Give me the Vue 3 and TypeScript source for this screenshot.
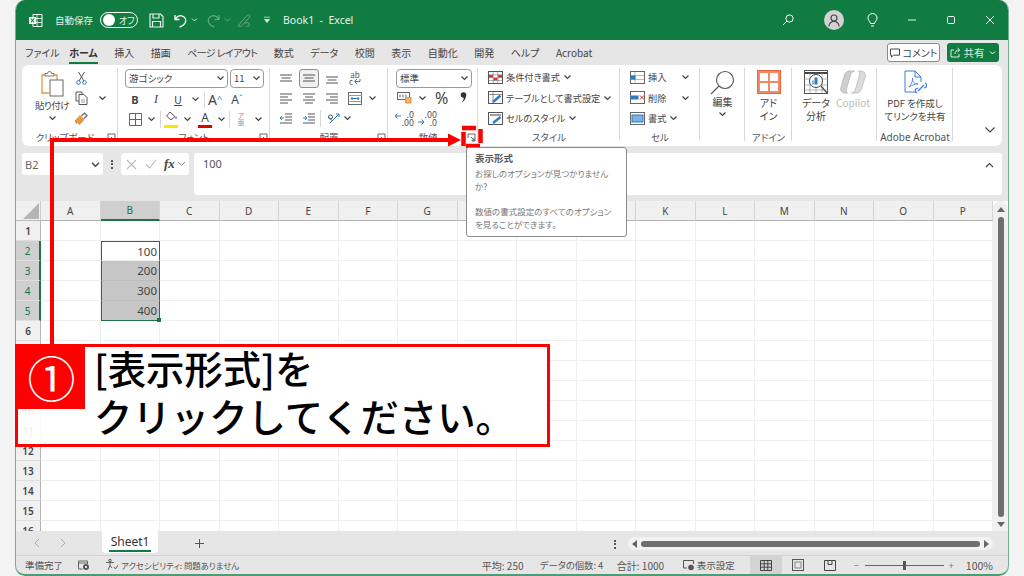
<template>
  <div class="page">
    <svg class="defs" width="0" height="0">
      <symbol id="chv" viewBox="0 0 9 6"><path d="M1.500 1.500 4.500 4.500 7.500 1.500" fill="none" stroke="#444" stroke-width="1.200" /></symbol>
      <symbol id="launch" viewBox="0 0 9 9"><path d="M1 5V1h7v7H5M4 4l3.500 3.500M7 4.800V7.200H4.600" fill="none" stroke="#666" /></symbol>
    </svg>

    <div class="win">
      <header class="title">
        <svg class="ic-xl" width="15" height="15" viewBox="0 0 15 15">
          <path d="M5 1.500h9v12H5z" fill="none" stroke="#fff" />
          <path d="M9 1.500v12M5 5.500h9M5 9.500h9" stroke="#fff" stroke-width=".8" />
          <rect x="1" y="4" width="7" height="7" fill="#fff" />
          <path d="M2.800 5.500 6.200 9.500M6.200 5.500 2.800 9.500" stroke="#107c41" stroke-width="1.100" />
        </svg>
        <span class="auto">自動保存</span>
        <span class="toggle"><i></i><b>オフ</b></span>
        <svg class="ic-save" width="15" height="15" viewBox="0 0 15 15"><path d="M1 1h10.500L14 3.500V14H1zM4 1v4h6V1M3.500 14V8.500h8V14" fill="none" stroke="#e4efe8" stroke-width="1.200" /></svg>
        <svg class="ic-undo" width="15" height="15" viewBox="0 0 15 15"><path d="M2 2v4.500h4.500M2.300 6.200C4 3.600 6.200 2.400 8.600 2.800c3.600.7 5 4.300 3.600 7C11 12 9 13.600 6.500 14" fill="none" stroke="#fff" stroke-width="1.300" /></svg>
        <svg class="ic-tchv" width="9" height="6"><path d="M2 1.500 4.500 4 7 1.500" fill="none" stroke="#d5e6dc" /></svg>
        <svg class="ic-redo" width="15" height="15" viewBox="0 0 15 15"><path d="M13 2v4.500H8.500M12.700 6.200C11 3.600 8.800 2.400 6.400 2.800c-3.600.7-5 4.300-3.600 7C4 12 6 13.600 8.500 14" fill="none" stroke="#62a982" stroke-width="1.200" /></svg>
        <svg class="ic-tchv2" width="9" height="6"><path d="M2 1.500 4.500 4 7 1.500" fill="none" stroke="#62a982" /></svg>
        <svg class="ic-draw" width="15" height="15" viewBox="0 0 15 15"><path d="M1 13 9 3.500 11.500 1.500 13 3 11.500 5.500 4 13.500zM8 10.500c2-1.500 4-1 4.500.5s-1 2.500-3 2.500" fill="none" stroke="#62a982" /></svg>
        <svg class="ic-qat" width="8" height="8" viewBox="0 0 8 8"><path d="M1 1.200h6M1.500 3.500h5L4 6.500z" fill="#e4efe8" stroke="#e4efe8" stroke-width=".7" /></svg>
        <span class="doc">Book1&nbsp; -&nbsp; Excel</span>
        <span class="title-right">
          <svg class="ic-search" width="12" height="12" viewBox="0 0 12 12"><circle cx="7.500" cy="4.500" r="3.600" fill="none" stroke="#fff" /><path d="M5 7 1 11" stroke="#fff" /></svg>
          <span class="avatar">
            <svg width="12" height="13" viewBox="0 0 12 13"><circle cx="6" cy="4" r="3" fill="none" stroke="#444" stroke-width="1.100" /><path d="M.8 12.500c.5-3.500 2.500-5 5.200-5s4.700 1.500 5.200 5" fill="none" stroke="#444" stroke-width="1.100" /></svg>
          </span>
          <svg class="ic-bulb" width="11" height="14" viewBox="0 0 11 14"><path d="M3.500 10.500C3 8 1 7.500 1 5a4.500 4.500 0 0 1 9 0c0 2.500-2 3-2.500 5.500zM4 13h3" fill="none" stroke="#fff" /></svg>
          <span class="wbtn"><svg width="10" height="10"><path d="M1 5h8" stroke="#e4efe8" /></svg></span>
          <span class="wbtn"><svg width="10" height="10"><rect x="1.500" y="1.500" width="7" height="7" rx="1.200" fill="none" stroke="#fff" /></svg></span>
          <span class="wbtn"><svg width="10" height="10"><path d="M1 1 9 9M9 1 1 9" stroke="#fff" /></svg></span>
        </span>
      </header>

      <nav class="menu">
        <span v-for="t in tabs" :key="t" class="tab" :class="{ on: t === 'ホーム' }">{{ t }}</span>
        <span class="menu-right">
          <span class="comment">
            <svg width="10" height="10" viewBox="0 0 10 10"><path d="M.5 1h9v6.200H3.500L1.500 9V7.200h-1z" fill="none" stroke="#333" stroke-width=".9" /></svg>
            コメント
          </span>
          <span class="share">
            <svg width="11" height="11" viewBox="0 0 11 11"><path d="M4 3H1v7h8V7M5 7c0-2.500 1.500-4 4-4M7.500 1 9.800 3 7.500 5" fill="none" stroke="#dcebe2" /></svg>
            共有
            <svg width="9" height="6"><path d="M2 1.500 4.500 4 7 1.500" fill="none" stroke="#fff" /></svg>
          </span>
        </span>
      </nav>

      <section class="ribbon">
        <!-- クリップボード -->
        <div class="grp g-clip">
          <div class="body clip">
            <div class="paste">
              <svg width="23" height="26" viewBox="0 0 23 26">
                <path d="M13 4h3v14M8 22H1V4h3" fill="none" stroke="#e8973a" stroke-width="1.300" />
                <path d="M4 5V2.500h2.500a2 2 0 0 1 4 0H13V5z" fill="#fff" stroke="#777" />
                <rect x="9" y="9" width="13" height="16" fill="#fff" stroke="#666" />
              </svg>
              <span class="lb">貼り付け</span>
              <svg class="c" width="9" height="6"><use href="#chv" /></svg>
            </div>
            <div class="clip-tools">
              <span class="tool">
                <svg width="11" height="14" viewBox="0 0 11 14"><path d="M2.500 1 8 10M8.500 1 3 10" stroke="#555" /><circle cx="2.500" cy="11.500" r="1.800" fill="none" stroke="#2c7cc4" /><circle cx="8.500" cy="11.500" r="1.800" fill="none" stroke="#2c7cc4" /></svg>
              </span>
              <span class="tool">
                <svg width="13" height="14" viewBox="0 0 13 14"><path d="M1 1h6v2M1 1v9h3" fill="none" stroke="#555" /><path d="M4 3.500h5l3 3v7H4z" fill="#fff" stroke="#555" /><path d="M6 9h4M6 11h4" stroke="#777" stroke-width=".7" /></svg>
                <svg class="c-abs" width="9" height="6"><use href="#chv" /></svg>
              </span>
              <span class="tool">
                <svg width="14" height="13" viewBox="0 0 14 13"><path d="M1 9 6 3.500 10 7.500 5.500 12.500 3.500 10.500 2.500 11.500z" fill="#ea9a3e" stroke="#d67c1f" stroke-width=".7" /><path d="M7.500 4 10.500 1l2.500 2.500-3 3" fill="none" stroke="#666" stroke-width="1.200" /></svg>
              </span>
            </div>
          </div>
          <div class="cap pad">クリップボード<svg class="launch" width="9" height="9"><use href="#launch" /></svg></div>
        </div>

        <!-- フォント -->
        <div class="grp g-font">
          <div class="body col">
            <div class="row sel-row">
              <span class="sel sel-font">游ゴシック<svg width="9" height="6"><use href="#chv" /></svg></span>
              <span class="sel sel-size">11<svg width="9" height="6"><use href="#chv" /></svg></span>
            </div>
            <div class="row r2">
              <span class="btn bold">B</span>
              <span class="btn ital">I</span>
              <span class="btn und">U</span>
              <svg class="cv" width="9" height="6"><use href="#chv" /></svg>
              <span class="vsep"></span>
              <span class="btn big">A<sup>^</sup></span>
              <span class="btn mid">A<sup>ˇ</sup></span>
            </div>
            <div class="row r3">
              <span class="btn">
                <svg width="13" height="13"><path d="M.5.500h12v12H.5zM6.500.5v12M.5 6.500h12" fill="none" stroke="#666" /></svg>
              </span>
              <svg class="cv" width="9" height="6"><use href="#chv" /></svg>
              <span class="vsep"></span>
              <span class="btn colorbtn">
                <svg width="13" height="9" viewBox="0 0 13 9"><path d="M5 1 10 5.500 6 9 1.500 5z" fill="none" stroke="#555" /><path d="M11 5c1 1.500 1.200 3 0 3s-1-1.500 0-3z" fill="#2c7cc4" /></svg>
                <i class="bar yellow"></i>
              </span>
              <svg class="cv" width="9" height="6"><use href="#chv" /></svg>
              <span class="btn colorbtn fcolor">A<i class="bar red"></i></span>
              <svg class="cv" width="9" height="6"><use href="#chv" /></svg>
              <span class="vsep"></span>
              <span class="btn furi"><small>ア</small><small>亜</small></span>
              <svg class="cv" width="9" height="6"><use href="#chv" /></svg>
            </div>
          </div>
          <div class="cap">フォント<svg class="launch" width="9" height="9"><use href="#launch" /></svg></div>
        </div>

        <!-- 配置 -->
        <div class="grp g-align">
          <div class="body col">
            <div class="row ar">
              <span class="btn"><svg width="14" height="9"><path d="M1 1h12M2.500 4h9M1 7h12" stroke="#555" /></svg></span>
              <span class="btn active"><svg width="14" height="9"><path d="M1 1h12M2.500 4h9M1 7h12" stroke="#555" /></svg></span>
              <span class="btn"><svg class="low" width="14" height="9"><path d="M1 1h12M2.500 4h9M1 7h12" stroke="#555" /></svg></span>
              <span class="btn abc"><small>ab</small><small>c<svg width="8" height="7"><path d="M7 1v2.500H2M4 1 1.500 3.500 4 6" fill="none" stroke="#2c7cc4" /></svg></small></span>
            </div>
            <div class="row ar">
              <span class="btn"><svg width="14" height="11"><path d="M1 1h12M1 4h8M1 7h12M1 10h8" stroke="#555" /></svg></span>
              <span class="btn"><svg width="14" height="11"><path d="M1 1h12M3 4h8M1 7h12M3 10h8" stroke="#555" /></svg></span>
              <span class="btn"><svg width="14" height="11"><path d="M1 1h12M5 4h8M1 7h12M5 10h8" stroke="#555" /></svg></span>
              <span class="btn">
                <svg width="14" height="13"><rect x=".5" y=".5" width="13" height="12" fill="#fff" stroke="#666" /><path d="M.5 3.500h13M.5 9.500h13" stroke="#999" /><path d="M3 6.500h8M4.500 5 3 6.500 4.500 8M9.500 5 11 6.500 9.500 8" fill="none" stroke="#2c7cc4" /></svg>
              </span>
              <svg class="cv" width="9" height="6"><use href="#chv" /></svg>
            </div>
            <div class="row ar a3">
              <span class="btn"><svg width="14" height="11"><path d="M6 1h7M6 4h7M6 7h7M1 10h12" stroke="#555" /><path d="M1 5h4M3 3 1 5l2 2" fill="none" stroke="#2c7cc4" /></svg></span>
              <span class="btn"><svg width="14" height="11"><path d="M6 1h7M6 4h7M6 7h7M1 10h12" stroke="#555" /><path d="M1 5h4M3 3l2 2-2 2" fill="none" stroke="#2c7cc4" /></svg></span>
              <span class="vsep"></span>
              <span class="btn">
                <svg width="14" height="13" viewBox="0 0 14 13"><path d="M3 11 12 2M9 2h3v3" fill="none" stroke="#2c7cc4" /><circle cx="3.500" cy="5" r="2" fill="none" stroke="#555" /><path d="M5.500 9 2 5.500" stroke="#555" /></svg>
              </span>
              <svg class="cv" width="9" height="6"><use href="#chv" /></svg>
            </div>
          </div>
          <div class="cap">配置<svg class="launch" width="9" height="9"><use href="#launch" /></svg></div>
        </div>

        <!-- 数値 -->
        <div class="grp g-num">
          <div class="body col">
            <div class="row sel-row"><span class="sel sel-num">標準<svg width="9" height="6"><use href="#chv" /></svg></span></div>
            <div class="row nr">
              <span class="btn acc">
                <svg width="15" height="12" viewBox="0 0 15 12"><rect x=".5" y=".5" width="12" height="7" fill="#fff" stroke="#666" /><path d="M3 2.500v3M6 2.500v3M9 2.500v3" stroke="#666" /><rect x="8" y="5" width="6.500" height="6.500" rx="1" fill="#e8973a" /><path d="M9.500 7h3.500M9.500 9h3.500" stroke="#fff" stroke-width=".7" /></svg>
              </span>
              <svg class="cv" width="9" height="6"><use href="#chv" /></svg>
              <span class="pct">%</span>
              <svg class="comma" width="7" height="11" viewBox="0 0 7 11"><circle cx="3.500" cy="3" r="2.800" fill="#333" /><path d="M6 3.500C6 7 4 9.500 1.500 10.500 3.500 8.500 4 6.500 3.800 4z" fill="#333" /></svg>
            </div>
            <div class="row nr">
              <span class="btn dec"><svg width="20" height="16" viewBox="0 0 20 16"><path d="M1 5h6M3.500 2.500 1 5l2.500 2.500" fill="none" stroke="#2c7cc4" /></svg><b class="d1">.0</b><b class="d2">.00</b></span>
              <span class="btn dec"><svg width="20" height="16" viewBox="0 0 20 16"><path d="M1 11h6M4.500 8.500 7 11l-2.500 2.500" fill="none" stroke="#2c7cc4" /></svg><b class="d1">.00</b><b class="d2">.0</b></span>
            </div>
          </div>
          <div class="cap pad">数値<svg class="launch" width="9" height="9"><use href="#launch" /></svg></div>
        </div>

        <!-- スタイル -->
        <div class="grp g-style">
          <div class="body col">
            <div v-for="(s, i) in styleItems" :key="s" class="row line">
              <svg v-if="i === 0" width="15" height="13" viewBox="0 0 15 13"><rect x=".5" y=".5" width="14" height="12" fill="#fff" stroke="#555" /><rect x="1" y="4" width="4" height="2.500" fill="#d9302c" /><rect x="10" y="4" width="4" height="2.500" fill="#d9302c" /><rect x="5.500" y="7" width="4" height="2.500" fill="#d9302c" /><path d="M5.200 1v11M9.800 1v11M1 3.800h13M1 6.700h13M1 9.600h13" stroke="#777" stroke-width=".6" /></svg>
              <svg v-else-if="i === 1" width="15" height="13" viewBox="0 0 15 13"><rect x=".5" y=".5" width="14" height="12" fill="#fff" stroke="#555" /><path d="M.5 3.500h14M5 .5v12" stroke="#666" stroke-width=".7" /><path d="M5 11 12.500 4.500" stroke="#2c7cc4" stroke-width="2.400" /></svg>
              <svg v-else width="15" height="13" viewBox="0 0 15 13"><rect x=".5" y=".5" width="14" height="12" fill="#fff" stroke="#555" /><path d="M2 3h11" stroke="#888" stroke-width="1.600" /><path d="M5 11 12.500 5" stroke="#2c7cc4" stroke-width="2.400" /></svg>
              <span class="tx">{{ s }}</span>
              <svg width="9" height="6"><use href="#chv" /></svg>
            </div>
          </div>
          <div class="cap">スタイル</div>
        </div>

        <!-- セル -->
        <div class="grp g-cell">
          <div class="body col">
            <div class="row line">
              <svg width="15" height="13" viewBox="0 0 15 13"><rect x=".5" y=".5" width="14" height="12" fill="#fff" stroke="#666" /><path d="M.5 4.500h14M.5 8.500h14M5 .5v12" stroke="#888" stroke-width=".6" /><rect x=".5" y="4.500" width="5" height="4" fill="#2c7cc4" /></svg>
              <span class="tx">挿入</span>
              <svg class="cell-c" width="9" height="6"><use href="#chv" /></svg>
            </div>
            <div class="row line">
              <svg width="15" height="13" viewBox="0 0 15 13"><rect x=".5" y=".5" width="14" height="12" fill="#fff" stroke="#666" /><rect x=".5" y="4.500" width="8" height="4" fill="#2c7cc4" /><path d="M10 4.500 14 8.500M14 4.500 10 8.500" stroke="#d9302c" /></svg>
              <span class="tx">削除</span>
              <svg class="cell-c" width="9" height="6"><use href="#chv" /></svg>
            </div>
            <div class="row line">
              <svg width="15" height="13" viewBox="0 0 15 13"><rect x=".5" y=".5" width="14" height="12" fill="#fff" stroke="#666" /><rect x="2" y="3" width="11" height="7" fill="#7fb2e0" stroke="#2c7cc4" /></svg>
              <span class="tx">書式</span>
              <svg width="9" height="6"><use href="#chv" /></svg>
            </div>
          </div>
          <div class="cap">セル</div>
        </div>

        <!-- 編集 -->
        <div class="grp g-edit">
          <div class="body big-col">
            <svg width="25" height="25" viewBox="0 0 25 25"><circle cx="15" cy="10" r="8.500" fill="none" stroke="#555" stroke-width="1.100" /><path d="M9 16 1 24" stroke="#555" stroke-width="1.100" /></svg>
            <span class="lb">編集</span>
            <svg class="c" width="9" height="6"><use href="#chv" /></svg>
          </div>
        </div>

        <!-- アドイン -->
        <div class="grp g-addin">
          <div class="body big-col">
            <svg width="24" height="24" viewBox="0 0 24 24"><rect x=".5" y=".5" width="23" height="23" fill="#ee8a66" stroke="#e9673c" /><path d="M3 3h8v8H3zM13 3h8v8h-8zM3 13h8v8H3zM13 13h8v8h-8z" fill="#fff" /></svg>
            <span class="lb two">アド<br />イン</span>
          </div>
          <div class="cap">アドイン</div>
        </div>

        <!-- データ分析 / Copilot -->
        <div class="grp g-data">
          <div class="body pair">
            <div class="big-col">
              <svg width="24" height="24" viewBox="0 0 24 24"><rect x=".5" y=".5" width="23" height="23" fill="#fff" stroke="#555" /><path d="M.5 3h23" stroke="#444" stroke-width="2" /><path d="M.5 9h23M.5 15h23M.5 20h23M6 3v20M12 3v20M18 3v20" stroke="#999" stroke-width=".7" /><circle cx="12" cy="11" r="6.500" fill="#fff" stroke="#444" /><rect x="10.500" y="7.500" width="3" height="7" fill="#2c7cc4" /><rect x="8" y="10.500" width="2.200" height="4" fill="#7fb2e0" /><path d="M17 16 23 23" stroke="#555" stroke-width="1.400" /></svg>
              <span class="lb two">データ<br />分析</span>
            </div>
            <div class="big-col copilot">
              <svg width="28" height="24" viewBox="0 0 27 24"><path d="M5 23c-3 0-4.500-3-3.500-6L5 5c.8-2.800 3-4 5-4h5c-2 .5-3.500 2-4 4L7 19c-.5 2 0 3.500 1 4z" fill="#cfcfcf" stroke="#aaa" stroke-width=".6" /><path d="M22 1c3 0 4.500 3 3.500 6L22 19c-.8 2.800-3 4-5 4h-5c2-.5 3.500-2 4-4l4-14c.5-2 0-3.500-1-4z" fill="#dcdcdc" stroke="#aaa" stroke-width=".6" /></svg>
              <span class="lb">Copilot</span>
            </div>
          </div>
        </div>

        <!-- Acrobat -->
        <div class="grp g-acro">
          <div class="body big-col">
            <svg width="23" height="25" viewBox="0 0 23 25"><path d="M12 22H1V1h10l6 6v5M11 1v6h6" fill="none" stroke="#3b78e0" /><path d="M5 17c2-2 4-6 3.500-9C8 11 10 14 14 14c-3 0-6 1-9 3z" fill="none" stroke="#3b78e0" stroke-width=".8" /><path d="M14 21l6-6M13 23a2.500 2.500 0 0 1-1-4l2-1M21 13a2.500 2.500 0 0 1 1 4l-2 1" fill="none" stroke="#3b78e0" stroke-width="1.200" /></svg>
            <span class="lb two acro-lb">PDF を作成し<br />てリンクを共有</span>
          </div>
          <div class="cap acro-cap">Adobe Acrobat</div>
        </div>

        <div class="collapse">
          <svg width="12" height="8" viewBox="0 0 12 8"><path d="M1.500 1.500 6 6l4.500-4.500" fill="none" stroke="#444" stroke-width="1.100" /></svg>
        </div>
      </section>

      <section class="fbar">
        <div class="namebox">B2<svg width="11" height="7" viewBox="0 0 9 6"><use href="#chv" /></svg></div>
        <span class="dots"><i></i><i></i><i></i></span>
        <div class="fxbox">
          <svg width="11" height="11"><path d="M1 1 10 10M10 1 1 10" stroke="#bbb" stroke-width="1.100" /></svg>
          <svg width="12" height="10"><path d="M1 5.500 4.500 9 11 1" fill="none" stroke="#bbb" stroke-width="1.100" /></svg>
          <em>fx</em>
          <svg width="9" height="6"><path d="M1 1 4.500 4.500 8 1" fill="none" stroke="#888" /></svg>
        </div>
        <div class="finput">
          100
          <svg width="9" height="6"><path d="M1 5 4.500 1.500 8 5" fill="none" stroke="#444" stroke-width="1.200" /></svg>
        </div>
      </section>

      <section class="sheet">
        <div class="grid">
          <div class="hd corner"><svg width="16" height="16"><path d="M16 0V16H0z" fill="#b5b5b5" /></svg></div>
          <div v-for="c in cols" :key="c" class="hd colh" :class="{ picked: c === 'B' }">{{ c }}</div>
          <template v-for="r in rows" :key="r">
            <div class="hd rowh" :class="{ picked: r >= 2 && r <= 5 }">{{ r }}</div>
            <div
              v-for="c in cols"
              :key="c"
              class="cell"
              :class="cellClass(c, r)"
            >{{ cellValue(c, r) }}</div>
          </template>
        </div>
        <div class="vscroll">
          <span class="tri up"></span>
          <span class="vthumb"></span>
          <span class="tri down"></span>
        </div>
      </section>

      <section class="tabs">
        <span class="nav">
          <svg width="6" height="10"><path d="M5 1 1 5l4 4" fill="none" stroke="#aaa" /></svg>
          <svg width="6" height="10"><path d="M1 1l4 4-4 4" fill="none" stroke="#aaa" /></svg>
        </span>
        <span class="stab">Sheet1</span>
        <span class="plus">
          <svg width="11" height="11"><path d="M5.500 1v9M1 5.500h9" stroke="#555" /></svg>
        </span>
        <span class="dots small"><i></i><i></i><i></i></span>
        <span class="hscroll">
          <span class="tri left"></span>
          <span class="hthumb"></span>
          <span class="tri right"></span>
        </span>
      </section>

      <footer class="status">
        <span class="ready">準備完了</span>
        <svg class="st-macro" width="12" height="11" viewBox="0 0 12 11"><path d="M.5 1h9v3M.5 1v8h4" fill="none" stroke="#666" /><path d="M.5 3h9" stroke="#666" /><circle cx="8" cy="7" r="3" fill="#555" /><circle cx="8" cy="7" r="1.100" fill="#fff" /></svg>
        <svg class="st-acc" width="13" height="12" viewBox="0 0 13 12"><circle cx="5" cy="1.500" r="1.200" fill="none" stroke="#555" /><path d="M1 3.500h8M5 3.500v3L3 11M5 6.500 7 9M9 8l1.500 2L13 6" fill="none" stroke="#555" stroke-width=".9" /></svg>
        <span class="acc-tx">アクセシビリティ: 問題ありません</span>
        <span class="st-right">
          <span class="s1">平均: 250</span>
          <span class="s2">データの個数: 4</span>
          <span class="s3">合計: 1000</span>
          <span class="s4">
            <svg width="12" height="11" viewBox="0 0 12 11"><path d="M4 8H.5V.5h10V4" fill="none" stroke="#555" /><circle cx="8" cy="7.500" r="2.800" fill="#555" /></svg>
            表示設定
          </span>
          <span class="view on"><svg width="12" height="11"><path d="M.5.500h11v10H.5zM4.200.500v10M7.800.500v10M.5 3.800h11M.5 7.200h11" fill="none" stroke="#444" /></svg></span>
          <span class="view"><svg width="12" height="12"><rect x=".5" y=".5" width="11" height="11" fill="none" stroke="#555" /><rect x="3" y="3" width="6" height="6" fill="none" stroke="#888" /></svg></span>
          <span class="view"><svg width="12" height="11"><path d="M.5.500h11v10H.5zM4 .5v4h4v-4" fill="none" stroke="#444" /></svg></span>
          <span class="zoom">
            <i class="zm">−</i>
            <span class="slider"><b></b></span>
            <i class="zm">+</i>
          </span>
          <span class="pct100">100%</span>
        </span>
      </footer>
    </div>

    <!-- 注釈 -->
    <svg class="marks" width="1024" height="576" viewBox="0 0 1024 576">
      <path d="M52 345V140H452" fill="none" stroke="#f00" stroke-width="4" />
      <path d="M448 133.500 461 140 448 146.500z" fill="#f00" />
      <path d="M462 128h14M480.500 129v14M480 146h-14M463.500 146v-14" fill="none" stroke="#f00" stroke-width="4.500" />
    </svg>

    <div class="tip">
      <strong>表示形式</strong>
      <p>お探しのオプションが見つかりません<br />か?</p>
      <p>数値の書式設定のすべてのオプション<br />を見ることができます。</p>
    </div>

    <div class="callout">
      <div class="num">①</div>
      <div class="msg">[表示形式]を<br />クリックしてください。</div>
    </div>
  </div>
</template>

<script setup lang="ts">
const tabs = ['ファイル', 'ホーム', '挿入', '描画', 'ページ レイアウト', '数式', 'データ', '校閲', '表示', '自動化', '開発', 'ヘルプ', 'Acrobat'];
const styleItems = ['条件付き書式', 'テーブルとして書式設定', 'セルのスタイル'];
const cols = 'ABCDEFGHIJKLMNOP'.split('');
const rows = Array.from({ length: 16 }, (_, i) => i + 1);
const values: Record<number, number> = { 2: 100, 3: 200, 4: 300, 5: 400 };

const cellValue = (c: string, r: number) => (c === 'B' && values[r] ? values[r] : '');

const cellClass = (c: string, r: number) => {
  if (c !== 'B' || !values[r]) return '';
  return {
    range: true,
    first: r === 2,
    shade: r > 2,
    last: r === 5,
  };
};
</script>

<style>
html,
body {
  margin: 0;
  background: #f3f3f3;
}
</style>

<style scoped>
.page {
  position: relative;
  width: 1024px;
  height: 576px;
  overflow: hidden;
  background: #f3f3f3;
  font-family: "Noto Sans CJK JP", "Noto Sans", sans-serif;
  font-feature-settings: "palt";
  color: #444;
}
.defs {
  position: absolute;
}
.win {
  margin-left: 15px;
  width: 994px;
  height: 576px;
  box-sizing: border-box;
  display: flex;
  flex-direction: column;
  border-radius: 10px;
  border-left: 1px solid #74b08f;
  border-right: 1px solid #74b08f;
  border-bottom: 2px solid #4f9c74;
  background: #e6e6e6;
  overflow: hidden;
}

/* title */
.title {
  flex: none;
  height: 40px;
  background: #107c41;
  color: #e8f2ec;
  display: flex;
  align-items: center;
  font-size: 10px;
  margin: 0 -1px;
}
.ic-xl { margin-left: 13px; }
.auto { margin-left: 12px; font-size: 9.500px; width: 38px; }
.toggle {
  margin-left: 7px;
  width: 38px;
  height: 16px;
  box-sizing: border-box;
  border: 1px solid #fff;
  border-radius: 9px;
  display: flex;
  align-items: center;
  padding-left: 2px;
}
.toggle i { width: 12px; height: 12px; border-radius: 50%; background: #fff; }
.toggle b { font-weight: 400; font-size: 9px; margin-left: 4px; }
.ic-save { margin-left: 11px; }
.ic-undo { margin-left: 9px; }
.ic-tchv { margin-left: 2px; }
.ic-redo { margin-left: 7px; }
.ic-tchv2 { margin-left: 2px; }
.ic-draw { margin-left: 5px; }
.ic-qat { margin-left: 11px; }
.doc { margin-left: 12px; font-size: 10.500px; font-family: "Noto Sans", sans-serif; white-space: nowrap; }
.title-right { margin-left: auto; display: flex; align-items: center; }
.ic-search { margin-right: 30px; }
.avatar {
  width: 20px;
  height: 20px;
  border-radius: 50%;
  background: #d2d2d2;
  display: flex;
  align-items: center;
  justify-content: center;
  margin-right: 23px;
}
.ic-bulb { margin-right: 14px; }
.wbtn { width: 39px; display: flex; justify-content: center; }

/* menu */
.menu {
  flex: none;
  height: 25px;
  display: flex;
  align-items: center;
  padding-left: 9px;
  gap: 16.500px;
  font-size: 10px;
  color: #444;
}
.tab { position: relative; white-space: nowrap; line-height: 23px; }
.tab:first-child { margin-right: -7px; }
.tab:nth-child(5) { letter-spacing: -.6px; }
.tab.on { font-weight: 700; color: #333; }
.tab.on::after {
  content: "";
  position: absolute;
  left: 0;
  right: 0;
  bottom: 0;
  height: 2px;
  background: #107c41;
}
.menu-right { margin-left: auto; display: flex; gap: 7px; margin-right: 9px; }
.comment, .share {
  height: 19px;
  box-sizing: border-box;
  display: flex;
  align-items: center;
  gap: 3px;
  border-radius: 3px;
  font-size: 10px;
}
.comment { width: 53px; border: 1px solid #8a8a8a; background: #fff; justify-content: center; color: #444; }
.share { width: 52px; background: #107c41; color: #dcebe2; justify-content: center; font-size: 10.500px; }

/* ribbon */
.ribbon {
  flex: none;
  height: 81px;
  margin: 0 6px;
  background: #fff;
  border-radius: 6px;
  display: flex;
  position: relative;
}
.grp {
  flex: none;
  box-sizing: border-box;
  display: flex;
  flex-direction: column;
  padding-top: 3px;
  position: relative;
}
.grp::after {
  content: "";
  position: absolute;
  right: 0;
  top: 3px;
  bottom: 5px;
  width: 1px;
  background: #d8d8d8;
}
.g-clip { width: 96px; }
.g-font { width: 152px; }
.g-align { width: 118px; }
.g-num { width: 90px; }
.g-style { width: 142px; }
.g-cell { width: 80px; }
.g-edit { width: 45px; }
.g-addin { width: 47px; }
.g-data { width: 85px; }
.g-acro { width: 76px; }
.body { flex: 1; }
.col { display: flex; flex-direction: column; }
.cap {
  flex: none;
  height: 16px;
  line-height: 15px;
  text-align: center;
  font-size: 9.500px;
  color: #555;
  position: relative;
  white-space: nowrap;
}
.cap.pad { padding-right: 10px; }
.launch { position: absolute; right: 2px; top: 3px; }
.row { display: flex; align-items: center; height: 20px; flex: none; }
.btn {
  flex: none;
  width: 20px;
  height: 19px;
  display: flex;
  align-items: center;
  justify-content: center;
  box-sizing: border-box;
}
.cv { flex: none; }
.vsep { flex: none; width: 1px; height: 17px; background: #d8d8d8; }

.clip { display: flex; }
.paste { width: 45px; display: flex; flex-direction: column; align-items: center; padding-left: 15px; box-sizing: border-box; padding-top: 3px; }
.paste .lb { margin-top: 2px; font-size: 9.500px; letter-spacing: -.5px; }
.lb { font-size: 10px; color: #444; line-height: 13px; text-align: center; white-space: nowrap; }
.lb.two { margin-top: 2px; }
.c { margin-top: 3px; }
.clip-tools { display: flex; flex-direction: column; padding-left: 4px; }
.tool { height: 20px; width: 20px; display: flex; align-items: center; justify-content: center; position: relative; }
.c-abs { position: absolute; left: 27px; top: 7px; }

.sel {
  box-sizing: border-box;
  height: 19px;
  border: 1px solid #9a9a9a;
  border-radius: 4px;
  display: flex;
  align-items: center;
  justify-content: space-between;
  padding: 0 2px 0 3px;
  font-size: 9.500px;
  color: #444;
}
.g-font .sel-row { padding-left: 7px; gap: 2px; }
.sel-font { width: 103px; }
.sel-size { width: 34px; }
.g-num .sel-row { padding-left: 8px; }
.sel-num { width: 76px; }
.r2, .r3 { padding-left: 7px; }
.r2 { margin-top: 1px; }
.r2 .btn { font-size: 11px; }
.bold { font-weight: 700; font-family: "Noto Sans", sans-serif; }
.ital { margin-left: 1px; font-style: italic; font-family: "Liberation Serif", serif; font-size: 12px !important; }
.und { margin-left: 2px; text-decoration: underline; }
.r2 .cv { margin-left: 2.500px; }
.r2 .vsep { margin-left: 4.500px; }
.big, .mid { font-family: "Noto Sans", sans-serif; }
.big { font-size: 14px !important; }
.mid { font-size: 12px !important; margin-left: 2px; }
.big sup, .mid sup { font-size: 9px; color: #2c7cc4; line-height: 0; }
.r3 > :nth-child(2) { margin-left: 2px; }
.r3 > :nth-child(3) { margin-left: 4px; }
.r3 > :nth-child(5) { margin-left: 1.500px; }
.r3 > :nth-child(6) { margin-left: 3.500px; }
.r3 > :nth-child(7) { margin-left: 1.500px; }
.r3 > :nth-child(8) { margin-left: 3.500px; }
.r3 > :nth-child(9) { margin-left: 1px; }
.r3 > :nth-child(10) { margin-left: 2.500px; }
.colorbtn { flex-direction: column; height: 17px; justify-content: flex-start; position: relative; }
.fcolor { font-size: 12px; line-height: 13px; font-family: "Noto Sans", sans-serif; }
.bar { position: absolute; left: 3px; right: 3px; bottom: 0; height: 3px; }
.yellow { background: #ffe600; }
.red { background: #e00000; }
.furi { flex-direction: column; color: #999; }
.furi small { font-size: 7px; line-height: 7px; }

.ar { padding-left: 6px; gap: 3px; }
.a3 .vsep { margin-left: -2px; }
.a3 .cv { margin-left: -4px; }
.active { background: #f0f0f0; border: 1px solid #8e8e8e; border-radius: 3px; }
.low { margin-top: 4px; }
.abc { flex-direction: column; font-size: 8px; line-height: 7px; color: #555; }
.abc small { font-size: 8px; display: flex; align-items: center; }

.nr { padding-left: 6px; }
.acc { width: 21px; }
.nr .cv { margin-left: 3px; }
.pct { font-size: 16px; margin-left: 8px; width: 18px; font-family: "Noto Sans", sans-serif; color: #444; }
.comma { margin-left: 7px; margin-bottom: 2px; }
.dec { position: relative; width: 20px; margin-right: 3px; }
.dec svg { position: absolute; left: 0; top: 2px; }
.dec b { position: absolute; right: 0; font-size: 9px; font-weight: 400; line-height: 8px; color: #555; }
.d1 { top: 2px; }
.d2 { top: 10px; }

.line { padding-left: 10px; gap: 3px; height: 20.500px; }
.tx { font-size: 9.200px; color: #444; white-space: nowrap; }
.g-style .row:first-child, .g-cell .row:first-child { margin-top: -1px; }
.cell-c { margin-left: 12px; }

.big-col { display: flex; flex-direction: column; align-items: center; padding-top: 2px; }
.pair { display: flex; padding-left: 4px; }
.pair .big-col { width: 40px; }
.pair .big-col:last-child { width: 34px; }
.copilot .lb { color: #bbb; margin-top: 2px; }
.acro-lb { font-size: 9.500px; }
.acro-cap { font-size: 10px; font-family: "Noto Sans", sans-serif; }
.collapse { position: absolute; right: 6px; bottom: 7px; }

/* formula */
.fbar {
  flex: none;
  height: 55px;
  display: flex;
  align-items: flex-start;
  padding: 7px 6px 0;
  box-sizing: border-box;
}
.namebox {
  width: 81px;
  height: 22px;
  box-sizing: border-box;
  background: #fff;
  border-radius: 3px;
  display: flex;
  align-items: center;
  justify-content: space-between;
  padding: 0 2px 0 3px;
  font-size: 11px;
  font-family: "Noto Sans", sans-serif;
  color: #666;
}
.dots { width: 18px; display: flex; flex-direction: column; align-items: center; gap: 1.500px; height: 22px; justify-content: center; }
.dots i { width: 2px; height: 2px; background: #555; }
.fxbox {
  width: 68px;
  height: 22px;
  background: #fff;
  border-radius: 3px;
  display: flex;
  align-items: center;
  padding-left: 5px;
  gap: 8px;
  box-sizing: border-box;
}
.fxbox em {
  font-family: "Liberation Serif", serif;
  font-size: 13px;
  font-weight: 700;
  color: #444;
  margin-left: -1px;
}
.fxbox svg:last-child { margin-left: -6px; }
.finput {
  margin-left: 5px;
  flex: 1;
  height: 42px;
  box-sizing: border-box;
  background: #fff;
  border-radius: 3px;
  font-size: 11px;
  font-family: "Noto Sans", sans-serif;
  color: #555;
  padding: 3px 8px 0 9px;
  display: flex;
  justify-content: space-between;
}
.finput svg { margin-top: 6px; }

/* sheet */
.sheet { flex: 1; min-height: 0; display: flex; background: #fff; overflow: hidden; }
.grid {
  width: 977px;
  flex: none;
  display: grid;
  grid-template-columns: 25px repeat(16, 59.500px);
  grid-auto-rows: 20px;
  align-content: start;
  background: #fff;
}
.hd {
  background: #f0f0f0;
  font-size: 10px;
  font-family: "Noto Sans", sans-serif;
  color: #444;
  display: flex;
  align-items: center;
  justify-content: center;
  box-sizing: border-box;
}
.corner { align-items: flex-end; justify-content: flex-end; padding: 0 1px 1px 0; border-bottom: 1px solid #bbb; border-right: 1px solid #ccc; }
.colh { border-right: 1px solid #d4d4d4; border-bottom: 1px solid #b4b4b4; }
.colh.picked { background: #cfcfcf; color: #217346; border-bottom: 2px solid #217346; }
.rowh { border-right: 1px solid #b4b4b4; border-bottom: 1px solid #dedede; font-weight: 600; }
.rowh.picked { background: #cfcfcf; color: #217346; border-right: 2px solid #217346; font-weight: 400; }
.cell {
  border-right: 1px solid #efefef;
  border-bottom: 1px solid #efefef;
  font-size: 11.500px;
  font-family: "Noto Sans", sans-serif;
  color: #444;
  text-align: right;
  padding-right: 2px;
  line-height: 19px;
  box-sizing: border-box;
}
.range { border-left: 1px solid #217346; border-right: 1px solid #217346; position: relative; }
.first { border-top: 1px solid #217346; line-height: 20px; }
.shade { background: #c6c6c6; border-bottom-color: #bdbdbd; }
.last { border-bottom: 1px solid #217346; }
.last::after {
  content: "";
  position: absolute;
  right: -2px;
  bottom: -2px;
  width: 4px;
  height: 4px;
  background: #107c41;
}
.vscroll {
  flex: 1;
  background: #f0f0f0;
  border-radius: 7px 7px 0 0;
  display: flex;
  flex-direction: column;
  align-items: center;
  padding: 6px 0 4px;
  box-sizing: border-box;
  gap: 5px;
}
.tri { width: 0; height: 0; flex: none; display: block; }
.tri.up { border-left: 4px solid transparent; border-right: 4px solid transparent; border-bottom: 5px solid #666; }
.tri.down { border-left: 4px solid transparent; border-right: 4px solid transparent; border-top: 5px solid #666; }
.tri.left { border-top: 4px solid transparent; border-bottom: 4px solid transparent; border-right: 5px solid #666; }
.tri.right { border-top: 4px solid transparent; border-bottom: 4px solid transparent; border-left: 5px solid #666; }
.vthumb { width: 6px; flex: 1; background: #6e6e6e; border-radius: 3px; }

/* tabs */
.tabs {
  flex: none;
  height: 25px;
  display: flex;
  align-items: flex-start;
  background: #e6e6e6;
  border-bottom: 1px solid #d2d2d2;
  box-sizing: border-box;
  position: relative;
}
.nav { display: flex; gap: 20px; margin: 7px 0 0 18px; }
.stab {
  margin-left: 36px;
  width: 56px;
  height: 22px;
  background: #fff;
  border-radius: 0 0 4px 4px;
  font-size: 12px;
  font-family: "Noto Sans", sans-serif;
  color: #333;
  text-align: center;
  line-height: 22px;
  position: relative;
}
.stab::after {
  content: "";
  position: absolute;
  left: 7px;
  right: 7px;
  bottom: 1px;
  height: 2px;
  background: #107c41;
}
.plus { margin: 7px 0 0 36px; display: flex; }
.tabs .dots.small { position: absolute; left: 590px; top: 2px; width: 18px; }
.hscroll {
  margin-left: auto;
  margin-right: 15px;
  margin-top: 6px;
  width: 365px;
  height: 13px;
  border-radius: 7px;
  background: #f2f2f2;
  display: flex;
  align-items: center;
  padding: 0 4px;
  box-sizing: border-box;
  gap: 4px;
}
.hthumb { flex: 1; height: 6px; background: #6e6e6e; border-radius: 3px; }

/* status */
.status {
  flex: none;
  height: 18px;
  display: flex;
  align-items: center;
  padding-left: 9px;
  font-size: 9.500px;
  color: #555;
}
.st-macro { margin-left: 15px; }
.st-acc { margin-left: 15px; }
.acc-tx { margin-left: 3px; font-size: 8.400px; }
.st-right { margin-left: auto; display: flex; align-items: center; height: 100%; }
.s1 { width: 58px; font-size: 10px; white-space: nowrap; }
.s2 { width: 77px; font-size: 9.300px; white-space: nowrap; }
.s3 { width: 66px; font-size: 10px; white-space: nowrap; }
.s4 { width: 67px; display: flex; align-items: center; gap: 2px; }
.view { width: 32px; height: 100%; display: flex; align-items: center; justify-content: center; }
.view.on { background: #d4d4d4; }
.zoom { display: flex; align-items: center; margin-left: 8px; gap: 4px; }
.zm { font-style: normal; color: #777; font-size: 9px; width: 6px; }
.slider { width: 79px; height: 1px; background: #666; position: relative; margin: 0 1px; }
.slider b { position: absolute; left: 38px; top: -4px; width: 3px; height: 9px; background: #555; }
.pct100 { margin-left: 11px; margin-right: 15px; font-size: 10.500px; }

/* overlay */
.marks { position: absolute; left: 0; top: 0; pointer-events: none; }
.tip {
  position: absolute;
  left: 466px;
  top: 147px;
  width: 161px;
  height: 90px;
  box-sizing: border-box;
  padding: 4px 8px;
  background: #fff;
  border: 1px solid #8a8a8a;
  border-radius: 3px;
  font-size: 8.500px;
  line-height: 13px;
  color: #777;
}
.tip strong { display: block; color: #555; font-size: 9.500px; font-weight: 700; margin-bottom: 2px; }
.tip p { margin: 0 0 12px; white-space: nowrap; }
.tip p:last-child { margin: 0; }
.callout {
  position: absolute;
  left: 15px;
  top: 344px;
  width: 535px;
  height: 103px;
  box-sizing: border-box;
  border: 3px solid #f00;
  background: rgba(255, 255, 255, 0.92);
  display: flex;
  align-items: flex-start;
}
.num {
  flex: none;
  width: 67px;
  height: 62px;
  background: #f00;
  color: #fff;
  font-size: 48px;
  line-height: 58px;
  text-align: center;
  font-feature-settings: normal;
}
.msg {
  margin-left: 9px;
  font-size: 38.400px;
  line-height: 48px;
  font-weight: 500;
  color: #000;
  white-space: nowrap;
  margin-top: -4px;
  font-feature-settings: normal;
}
</style>
